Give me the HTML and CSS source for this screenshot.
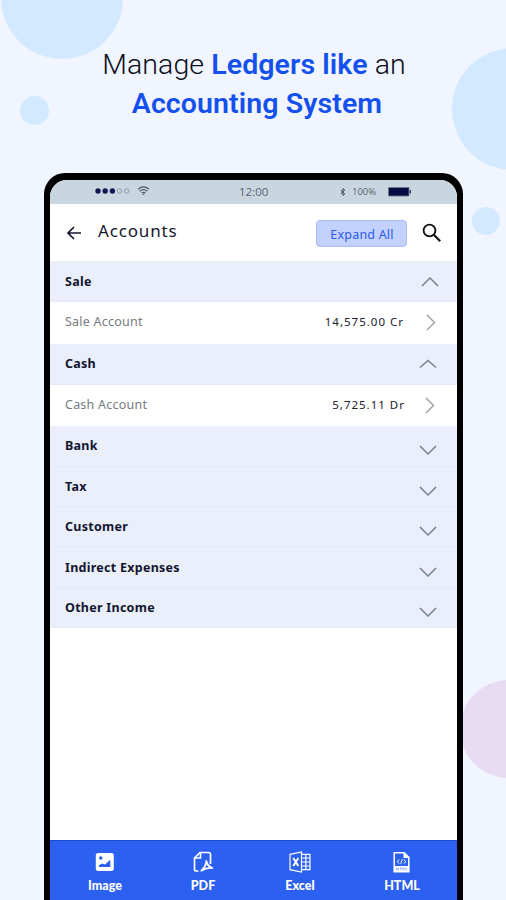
FILE: index.html
```html
<!DOCTYPE html>
<html lang="en">
<head>
<meta charset="utf-8">
<title>Manage Ledgers</title>
<link rel="stylesheet" href="styles.css">
</head>
<body>
<main class="poster">
  <i class="bubble bubble-tl"></i><i class="bubble bubble-l"></i><i class="bubble bubble-r"></i><i class="bubble bubble-rs"></i><i class="bubble bubble-pink"></i>
  <h1 class="headline"><span class="line1">Manage <b>Ledgers like</b> an</span><b class="line2">Accounting System</b></h1>
  <section class="phone">
    <div class="screen">
      <div class="status">
        <svg class="signal" width="56" height="12" viewBox="0 0 56 12"><g fill="#101a52"><circle cx="3" cy="6" r="2.7"/><circle cx="10.2" cy="6" r="2.7"/><circle cx="17.4" cy="6" r="2.7"/></g><g fill="none" stroke="#7f8c9a" stroke-width=".8"><circle cx="24.4" cy="6" r="2.2"/><circle cx="31.6" cy="6" r="2.2"/></g><g fill="none" stroke="#4d5867" stroke-width="1.2"><path d="M43 4.2q5.500-4.500 11 0M44.800 6.200q3.700-3 7.400 0M46.600 8.100q1.900-1.500 3.800 0"/></g><path d="M47.300 8.800h2.400l-1.200 1.500z" fill="#4d5867"/></svg>
        <span class="clock">12:00</span>
        <svg class="bt" width="6" height="8" viewBox="0 0 6 8"><path d="M.7 2.200 4.800 5.800 2.900 7.400V.6L4.800 2.200.7 5.800" fill="none" stroke="#414b5c" stroke-width="1"/></svg>
        <span class="percent">100%</span>
        <svg class="battery" width="24" height="10" viewBox="0 0 24 10"><path d="M.5.500h20.500v8.500H.5z" fill="#070d43" stroke="#6d7892" stroke-width=".8"/><path d="M22.300 3v3.500" stroke="#334057" stroke-width="1.500"/></svg>
      </div>
      <header class="bar">
        <svg class="back" width="16" height="14" viewBox="0 0 16 14"><path d="M15 7H2M8 1 2 7l6 6" fill="none" stroke="#17172f" stroke-width="1.700"/></svg>
        <h2 class="title">Accounts</h2>
        <button class="expand">Expand All</button>
        <svg class="search" width="20" height="20" viewBox="0 0 20 20" fill="none" stroke="#111"><circle cx="7.500" cy="7.500" r="5.900" stroke-width="1.900"/><path d="m11.800 11.800 6.400 6.400" stroke-width="2.200"/></svg>
      </header>
      <ul class="list">
        <li class="row group open"><span class="name">Sale</span><svg class="chev first" width="18" height="10" viewBox="0 0 18 10"><path d="m1 9 8-8 8 8"/></svg></li>
        <li class="row item"><span class="name">Sale Account</span><span class="amount">14,575.00 Cr</span><svg class="arrow" width="10" height="17" viewBox="0 0 10 17"><path d="m1 1 7.500 7.500L1 16"/></svg></li>
        <li class="row group open"><span class="name">Cash</span><svg class="chev" width="18" height="10" viewBox="0 0 18 10"><path d="m1 8.500 8-7 8 7"/></svg></li>
        <li class="row item second"><span class="name">Cash Account</span><span class="amount">5,725.11 Dr</span><svg class="arrow" width="10" height="17" viewBox="0 0 10 17"><path d="m1 1 7.500 7.500L1 16"/></svg></li>
        <li class="row group"><span class="name">Bank</span><svg class="chev" width="18" height="10" viewBox="0 0 18 10"><path d="m1 1 8 8 8-8"/></svg></li>
        <li class="row group"><span class="name">Tax</span><svg class="chev" width="18" height="10" viewBox="0 0 18 10"><path d="m1 1 8 8 8-8"/></svg></li>
        <li class="row group"><span class="name">Customer</span><svg class="chev" width="18" height="10" viewBox="0 0 18 10"><path d="m1 1 8 8 8-8"/></svg></li>
        <li class="row group"><span class="name">Indirect Expenses</span><svg class="chev" width="18" height="10" viewBox="0 0 18 10"><path d="m1 1 8 8 8-8"/></svg></li>
        <li class="row group"><span class="name">Other Income</span><svg class="chev" width="18" height="10" viewBox="0 0 18 10"><path d="m1 1 8 8 8-8"/></svg></li>
      </ul>
      <nav class="exports">
        <a class="export"><svg width="22" height="22" viewBox="0 0 22 22"><rect x="1.800" y="2" width="18" height="18" rx="2.500" fill="#fff"/><circle cx="6.800" cy="7" r="1.800" fill="#2b60f0"/><path d="M5 16v-1.800l3-1.700 3 1 5.300-4.800V16z" fill="#2b60f0"/></svg><span>Image</span></a>
        <a class="export"><svg width="22" height="22" viewBox="0 0 22 22" fill="none" stroke="#fff" stroke-width="1.700"><path d="M6.500 20H4.200Q2.500 20 2.500 18.300V7L8 1.500h8.500q2 0 2 2V13M8.500 1.800V7H2.800"/><path d="M14.300 10q0 5-5 9.700 5-3.300 11-2.700-5-2-6-7z" stroke-width="1.800" stroke-linejoin="round"/></svg><span>PDF</span></a>
        <a class="export"><svg width="22" height="22" viewBox="0 0 22 22" fill="none" stroke="#fff" stroke-width="1.200"><path d="M1 3.300 12.500 1v20L1 18.700zM12.500 3.300H21v15.400h-8.500M12.500 7H21M12.500 11H21M12.500 15H21M16.800 3.300v15.400"/><path d="m4.300 7 5 8M9.300 7l-5 8" stroke-width="2"/></svg><span>Excel</span></a>
        <a class="export"><svg width="22" height="22" viewBox="0 0 22 22"><path d="M3.200 1.700h10l4.600 4.600v14.500H3.200z" fill="none" stroke="#fff" stroke-width="1.500"/><path d="M12.500 1.500V7H18z" fill="#fff"/><path d="M3 15h15v6H3z" fill="#fff"/><path d="m8.300 8.500-2.200 2 2.200 2m4.400-4 2.200 2-2.200 2M11.200 8.300l-1.400 4.500" fill="none" stroke="#fff"/><path d="M5.500 16.700v2.500m2-2.500v2.500m-2-1.200h2M8.800 16.900h2m-1 0v2.300m2 0v-2.500l1 1.200 1-1.200v2.500m1.500-2.500v2.500h1" stroke="#7e9df5" stroke-width=".7" fill="none"/></svg><span>HTML</span></a>
      </nav>
    </div>
  </section>
</main>
</body>
</html>
```

FILE: styles.css
```css
* { box-sizing: border-box; }
body { margin: 0; }
.poster {
  position: relative;
  width: 506px;
  height: 900px;
  overflow: hidden;
  background: #f0f5ff;
  font-family: "Noto Sans", sans-serif;
  display: flex;
  flex-direction: column;
}
.bubble { position: absolute; border-radius: 50%; background: #d3e9ff; }
.bubble-tl { left: 1px; top: -63px; width: 122px; height: 122px; }
.bubble-l { left: 20px; top: 96px; width: 29px; height: 29px; }
.bubble-r { left: 452px; top: 48px; width: 122px; height: 122px; }
.bubble-rs { left: 472px; top: 207px; width: 28px; height: 28px; }
.bubble-pink { left: 460px; top: 680px; width: 98px; height: 98px; background: #e7dcf3; }

.headline {
  position: relative;
  flex: none;
  height: 173px;
  margin: 0;
  padding: 45px 0 0 2px;
  font: 300 28.500px/39px Roboto, sans-serif;
  color: #0d0e1c;
  text-align: center;
  white-space: nowrap;
}
.headline span, .headline b { letter-spacing: .1px; }
.headline b { font-weight: 600; color: #1450ee; }
.line1 { display: block; }
.line2 { display: block; padding-left: 6px; }

.phone {
  position: relative;
  flex: none;
  width: 419px;
  height: 727px;
  margin-left: 44px;
  padding: 7px 6px 0;
  background: #000;
  border-radius: 21px 21px 0 0;
}
.screen {
  height: 720px;
  display: flex;
  flex-direction: column;
  overflow: hidden;
  background: #fff;
  border-radius: 17px 17px 0 0;
}
.status {
  flex: none;
  height: 24px;
  display: flex;
  align-items: center;
  padding-left: 45px;
  background: #c9d6df;
  font: 11.500px/24px "Open Sans", sans-serif;
  color: #596473;
}
.signal { margin-top: -2px; }
.clock { margin-left: 88px; width: 31px; }
.bt { margin-left: 70px; }
.percent { margin-left: 6px; width: 26px; font-size: 9.500px; }
.battery { margin-left: 10px; }

.bar { flex: none; height: 57px; display: flex; align-items: center; padding-left: 16px; }
.title { width: 90px; margin: -5px 0 0 16px; font-size: 17px; font-weight: 400; letter-spacing: .850px; color: #17172f; }
.expand {
  width: 91px;
  height: 27px;
  margin: 2px 0 0 128px;
  padding: 0 0 0 1px;
  border: 1px solid #abbcf4;
  border-radius: 4px;
  background: #c3d1fe;
  color: #2c59ef;
  font: 12.500px/27px "Noto Sans", sans-serif;
  letter-spacing: .2px;
  white-space: nowrap;
}
.search { margin-left: 15px; }

.list { margin: 0; padding: 0; list-style: none; flex: 1; }
.row { display: flex; align-items: center; height: 40.400px; padding: 0 20px 0 15px; font-size: 12.500px; color: #12152f; }
.name { flex: 1; margin-top: -1px; white-space: nowrap; }
.group { background: #ebeffb; font-weight: 700; border-bottom: 1px solid #e3e9f6; letter-spacing: .270px; }
.group:not(.open) .name { margin-top: 0; }
.item, .open { height: 41.300px; }
.open .name { margin-top: 0; }
.item .name { margin-top: -2px; color: #777a82; font-weight: 400; letter-spacing: .230px; }
.amount { width: 84px; margin: -3px 22px 0 0; text-align: right; white-space: nowrap; font-size: 11.500px; letter-spacing: 1px; color: #20222f; display: flex; justify-content: flex-end; }
.chev { fill: none; stroke: #758391; stroke-width: 1.500; margin-top: 9px; }
.open .chev { margin-top: 1px; }
.open .first { margin-right: -2px; }
.arrow { fill: none; stroke: #969da5; stroke-width: 1.400; margin: -1px 1px 0 0; }
.second .arrow { margin-right: 2px; margin-top: 0; }
.second .amount { margin-right: 20px; }

.exports { flex: none; height: 60px; display: flex; padding-left: 6px; background: #2b60f0; border-top: 1px solid #174ccc; }
.export {
  width: 98px;
  display: flex;
  flex-direction: column;
  align-items: center;
  padding-top: 10px;
  color: #fff;
  font: 900 12.500px/18px Lato, sans-serif;
}
.export span { margin-top: 4px; }
.export:nth-child(3) { margin-left: -1px; }
.export:last-child { margin-left: 4px; }
```
